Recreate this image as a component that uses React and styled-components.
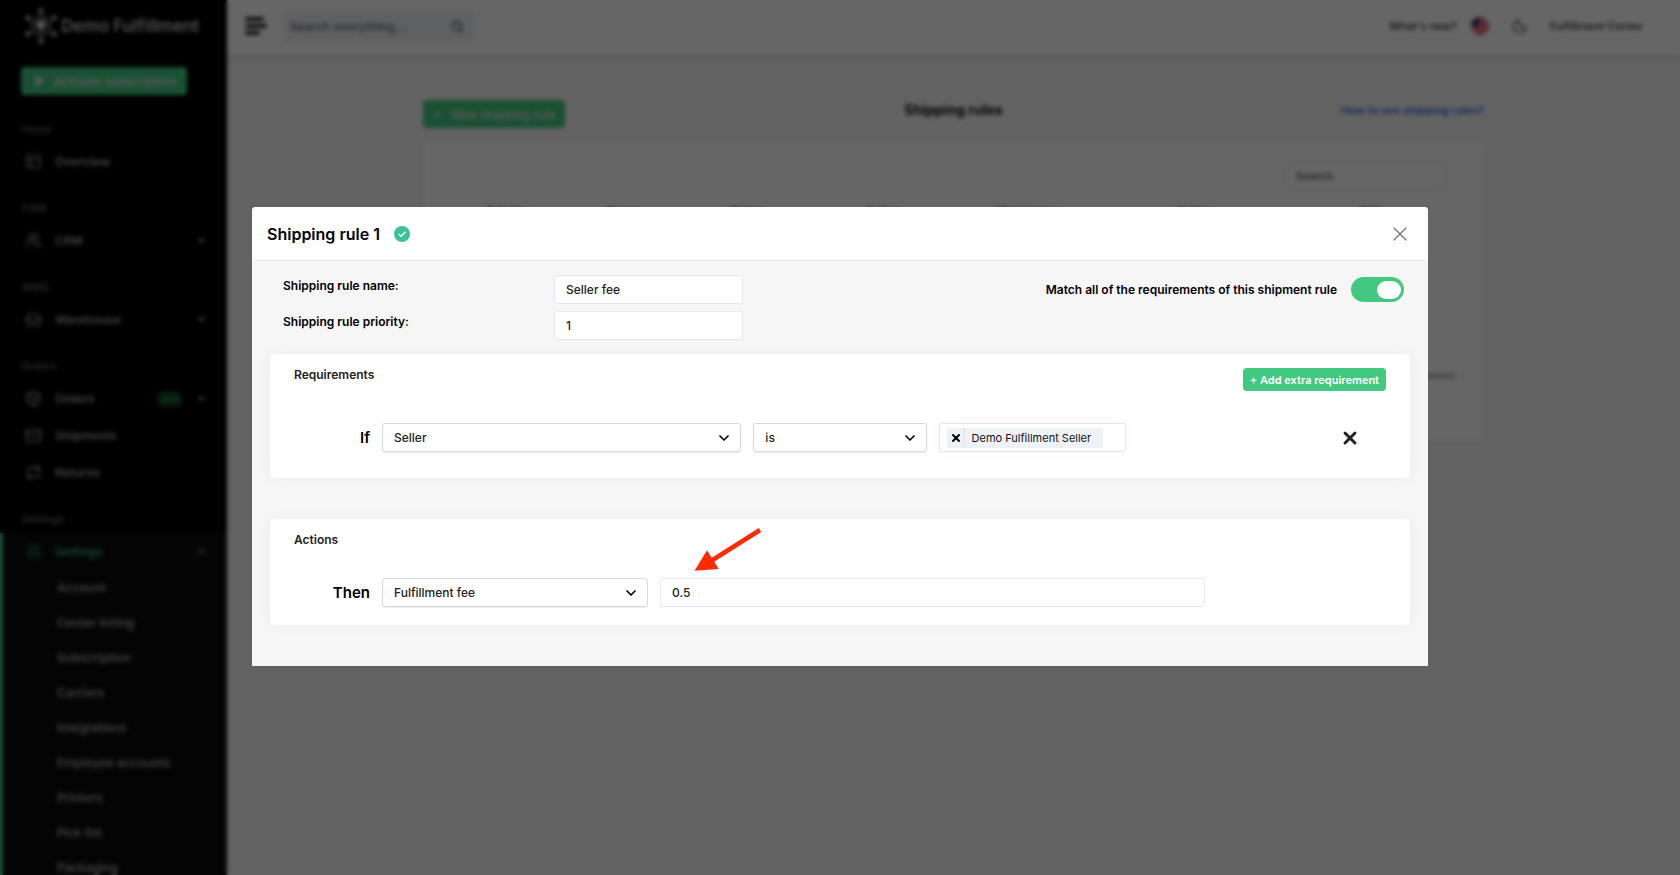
import React, { useState } from 'react';
import styled, { createGlobalStyle } from 'styled-components';
import {
	Box,
	ChevronDown,
	ChevronUp,
	Inbox,
	Mail,
	Moon,
	PanelsTopLeft,
	Play,
	Plus,
	Repeat,
	Search,
	SlidersVertical,
	Users,
	X,
} from 'lucide-react';

const NAV_GROUPS = [
	{ title: 'Home', items: [{ label: 'Overview', icon: PanelsTopLeft }] },
	{ title: 'CRM', items: [{ label: 'CRM', icon: Users, expandable: true }] },
	{ title: 'WMS', items: [{ label: 'Warehouse', icon: Inbox, expandable: true }] },
	{
		title: 'Orders',
		items: [
			{ label: 'Orders', icon: Box, expandable: true, badge: '261' },
			{ label: 'Shipments', icon: Mail },
			{ label: 'Returns', icon: Repeat },
		],
	},
];

const SETTINGS_LINKS = [
	'Account',
	'Center listing',
	'Subscription',
	'Carriers',
	'Integrations',
	'Employee accounts',
	'Printers',
	'Pick list',
	'Packaging',
];

const COLUMNS = [
	{ label: 'Priority', width: '11%' },
	{ label: 'Name', width: '12%' },
	{ label: 'Status', width: '13%' },
	{ label: 'Active', width: '14%' },
	{ label: 'Match rules', width: '15%' },
	{ label: 'Action', width: '18%' },
	{ label: 'Edit', width: '17%' },
];

const Logo = () => (
	<svg width="32" height="36" viewBox="0 0 32 36" fill="none" stroke="#bbb" strokeWidth="1.500">
		<path d="M16 8l8.500 5v10L16 28l-8.500-5V13z" />
		<path d="M16 18v7" />
		<g fill="#ccc" stroke="none">
			<path d="M11 14l5-2 5 2v5l-5 4-5-4z" />
			<circle cx="16" cy="3" r="2.500" />
			<circle cx="16" cy="33" r="2.500" />
			<circle cx="3" cy="10" r="2.500" />
			<circle cx="29" cy="10" r="2.500" />
			<circle cx="3" cy="26" r="2.500" />
			<circle cx="29" cy="26" r="2.500" />
		</g>
	</svg>
);

const MenuBars = () => (
	<svg width="22" height="20" viewBox="0 0 22 20" stroke="#222" strokeWidth="4" strokeLinecap="round">
		<path d="M2 3h15M2 10h18M2 17h11" />
	</svg>
);

const Flag = () => (
	<svg width="18" height="18" viewBox="0 0 18 18">
		<clipPath id="flag-round">
			<circle cx="9" cy="9" r="9" />
		</clipPath>
		<g clipPath="url(#flag-round)">
			<rect width="18" height="18" fill="#eee" />
			<path d="M0 1h18M0 5h18M0 9h18M0 13h18M0 17h18" stroke="#d02038" strokeWidth="2.600" />
			<rect width="8" height="9" fill="#20307a" />
		</g>
	</svg>
);

const CheckBadge = () => (
	<svg width="16" height="16" viewBox="0 0 16 16" fill="none">
		<circle cx="8" cy="8" r="8" fill="#38c296" />
		<path d="M5 8.200l2.100 2.100L11 6.200" stroke="#fff" strokeWidth="1.500" strokeLinecap="round" strokeLinejoin="round" />
	</svg>
);

const SelectField = ({ label, value }) => (
	<SelectWrapper>
		<Select aria-label={label} defaultValue={value}>
			<option>{value}</option>
		</Select>
		<ChevronDown size={16} strokeWidth={2.5} />
	</SelectWrapper>
);

const Sidebar = () => (
	<SidebarWrapper>
		<Brand>
			<Logo />
			Demo Fulfillment
		</Brand>
		<ActivateButton type="button">
			<Play size={12} fill="currentColor" />
			Activate subscription
		</ActivateButton>
		<Nav>
			{NAV_GROUPS.map((group) => (
				<NavGroup key={group.title}>
					<NavTitle>{group.title}</NavTitle>
					{group.items.map(({ label, icon: Icon, expandable, badge }) => (
						<NavItem key={label} href="#">
							<Icon size={17} />
							<NavLabel>{label}</NavLabel>
							{badge && <NavBadge>{badge}</NavBadge>}
							{expandable && <ChevronDown size={11} strokeWidth={4} />}
						</NavItem>
					))}
				</NavGroup>
			))}
			<NavTitle>Settings</NavTitle>
			<ActiveSection>
				<NavItem href="#" $active>
					<SlidersVertical size={17} />
					<NavLabel>Settings</NavLabel>
					<ChevronUp size={11} strokeWidth={4} />
				</NavItem>
				{SETTINGS_LINKS.map((label) => (
					<SubItem key={label} href="#">{label}</SubItem>
				))}
			</ActiveSection>
		</Nav>
	</SidebarWrapper>
);

const TopBar = () => (
	<TopBarWrapper>
		<IconButton type="button" aria-label="Toggle menu">
			<MenuBars />
		</IconButton>
		<GlobalSearch>
			<input type="text" aria-label="Search everything" placeholder="Search everything..." />
			<Search size={13} strokeWidth={3} />
		</GlobalSearch>
		<TopLinks>
			<NewsLink>
				<TopLink href="#">What's new?</TopLink>
				<Flag />
			</NewsLink>
			<Moon size={17} />
			<TopLink href="#">Fulfillment Center</TopLink>
		</TopLinks>
	</TopBarWrapper>
);

const RulesPage = () => (
	<Content>
		<PageHeader>
			<NewRuleButton type="button">
				<Plus size={11} strokeWidth={3} />
				New shipping rule
			</NewRuleButton>
			<PageTitle>Shipping rules</PageTitle>
			<HelpLink href="#">How to use shipping rules?</HelpLink>
		</PageHeader>
		<Card>
			<TableSearch type="text" aria-label="Search" placeholder="Search" />
			<Table>
				<thead>
					<tr>
						{COLUMNS.map(({ label, width }) => (
							<Th key={label} $width={width}>{label}</Th>
						))}
					</tr>
				</thead>
			</Table>
			<ScrollTrack />
		</Card>
	</Content>
);

const RuleModal = () => {
	const [matchAll, setMatchAll] = useState(true);

	return (
		<Modal role="dialog" aria-labelledby="rule-title">
			<ModalHeader>
				<ModalTitle id="rule-title">Shipping rule 1</ModalTitle>
				<CheckBadge />
				<CloseButton type="button" aria-label="Close">
					<X size={24} strokeWidth={1.5} />
				</CloseButton>
			</ModalHeader>
			<ModalBody>
				<RuleForm>
					<FormFields>
						<FieldLabel htmlFor="rule-name">Shipping rule name:</FieldLabel>
						<TextInput id="rule-name" type="text" defaultValue="Seller fee" />
						<FieldLabel htmlFor="rule-priority">Shipping rule priority:</FieldLabel>
						<TextInput id="rule-priority" type="text" defaultValue="1" />
					</FormFields>
					<ToggleLabel>
						Match all of the requirements of this shipment rule
						<Toggle
							type="checkbox"
							checked={matchAll}
							onChange={(e) => setMatchAll(e.target.checked)}
						/>
					</ToggleLabel>
				</RuleForm>

				<Panel>
					<PanelHeader>
						<PanelTitle>Requirements</PanelTitle>
						<AddButton type="button">+ Add extra requirement</AddButton>
					</PanelHeader>
					<RuleRow $columns="76px 359fr 173fr 187fr 248fr">
						<RowLabel>If</RowLabel>
						<SelectField label="Requirement field" value="Seller" />
						<SelectField label="Requirement operator" value="is" />
						<TagBox>
							<Tag>
								<TagRemove type="button" aria-label="Remove Demo Fulfillment Seller">
									<X size={12} strokeWidth={4} />
								</TagRemove>
								<TagText>Demo Fulfillment Seller</TagText>
							</Tag>
						</TagBox>
						<RemoveButton type="button" aria-label="Remove requirement">
							<X size={20} strokeWidth={3.5} />
						</RemoveButton>
					</RuleRow>
				</Panel>

				<Panel $compact>
					<PanelHeader>
						<PanelTitle>Actions</PanelTitle>
					</PanelHeader>
					<RuleRow $columns="76px 266fr 545fr 169fr">
						<RowLabel>Then</RowLabel>
						<SelectField label="Action" value="Fulfillment fee" />
						<ValueField>
							<TextInput type="text" aria-label="Fee amount" defaultValue="0.5" />
							<Arrow viewBox="0 0 68 44">
								<path d="M66 2L17 33" stroke="#ff2a00" strokeWidth="4.500" />
								<path d="M0.500 42.700L13 22.300L24.700 41z" fill="#ff2a00" />
							</Arrow>
						</ValueField>
					</RuleRow>
				</Panel>
			</ModalBody>
		</Modal>
	);
};

const App = () => {
	return (
		<>
			<GlobalStyle />
			<Page>
				<Sidebar />
				<Main>
					<TopBar />
					<RulesPage />
				</Main>
			</Page>
			<Overlay>
				<RuleModal />
			</Overlay>
		</>
	);
};

export default App;

const GlobalStyle = createGlobalStyle`
	* {
		box-sizing: border-box;
	}
	body {
		margin: 0;
		background: #f6f6f6;
		font-family: Inter, "Liberation Sans", sans-serif;
		font-size: 12px;
		font-weight: 600;
		color: #222;
	}
	button, input, select {
		font: inherit;
		color: inherit;
	}
	button {
		border: 0;
		padding: 0;
		background: none;
		cursor: pointer;
	}
	a {
		text-decoration: none;
	}
	svg {
		flex-shrink: 0;
	}
`;

const Page = styled.div`
	display: flex;
	height: 100vh;
	overflow: hidden;
`;

/* sidebar */
const SidebarWrapper = styled.aside`
	flex: 0 0 227px;
	background: #000;
	color: #999;
	overflow: hidden;
`;
const Brand = styled.div`
	display: flex;
	align-items: center;
	gap: 4px;
	padding: 8px 0 0 25px;
	font-size: 17px;
	color: #bbb;
	white-space: nowrap;
`;
const ActivateButton = styled.button`
	display: flex;
	align-items: center;
	gap: 8px;
	height: 28px;
	margin: 23px 0 22px 21px;
	padding: 0 10px 0 12px;
	border-radius: 4px;
	background: #42c97f;
	color: #ddd;
	white-space: nowrap;
`;
const Nav = styled.nav``;
const NavGroup = styled.div`
	margin-bottom: 16px;
`;
const NavTitle = styled.div`
	height: 24px;
	margin-bottom: 2px;
	padding-left: 21px;
	font-size: 11px;
	font-weight: 500;
	line-height: 24px;
	color: #666;
`;
const NavItem = styled.a`
	display: flex;
	align-items: center;
	gap: 13px;
	height: 37px;
	padding: 0 20px 0 25px;
	font-size: 12px;
	color: ${({ $active }) => ($active ? '#2fa866' : 'inherit')};
`;
const NavLabel = styled.span`
	flex: 1;
`;
const NavBadge = styled.span`
	padding: 2px 5px;
	border-radius: 8px;
	background: #12401f;
	font-size: 10px;
	color: #2a8a50;
`;
const ActiveSection = styled.div`
	background: #0c0c0c;
	box-shadow: inset 3px 0 0 #42c97f;
`;
const SubItem = styled.a`
	display: block;
	height: 35px;
	padding-left: 57px;
	font-size: 12px;
	line-height: 35px;
	color: inherit;
`;

/* page behind the dialog */
const Main = styled.div`
	flex: 1;
	min-width: 0;
`;
const TopBarWrapper = styled.header`
	display: flex;
	align-items: center;
	height: 54px;
	padding: 0 37px 2px 18px;
	background: #fff;
	box-shadow: 0 4px 14px rgba(0, 0, 0, 0.08);
`;
const IconButton = styled.button`
	display: flex;
`;
const GlobalSearch = styled.label`
	display: flex;
	align-items: center;
	width: 190px;
	height: 32px;
	margin-left: 17px;
	padding: 0 10px 0 6px;
	border-radius: 4px;
	background: #eef1f6;
	color: #555;

	input {
		flex: 1;
		min-width: 0;
		border: 0;
		padding: 0;
		background: none;
		font-weight: 500;
	}
	input::placeholder {
		color: #666;
	}
`;
const TopLinks = styled.div`
	display: flex;
	align-items: center;
	gap: 22px;
	margin-left: auto;
	color: #45555a;
`;
const NewsLink = styled.div`
	display: flex;
	align-items: center;
	gap: 14px;
`;
const TopLink = styled.a`
	font-size: 11px;
	font-weight: 500;
	color: #333;
`;
const Content = styled.main`
	width: 73%;
	margin: 0 auto;
	padding-top: 46px;
`;
const PageHeader = styled.div`
	display: grid;
	grid-template-columns: 1fr auto 1fr;
	align-items: start;
	height: 41px;
`;
const NewRuleButton = styled.button`
	display: flex;
	align-items: center;
	justify-self: start;
	gap: 8px;
	height: 28px;
	padding: 0 9px;
	border-radius: 4px;
	background: #42c97f;
	color: #ddd;
`;
const PageTitle = styled.h1`
	margin: 0;
	font-size: 14px;
	line-height: 20px;
	color: #111;
`;
const HelpLink = styled.a`
	justify-self: end;
	font-size: 11px;
	font-weight: 600;
	line-height: 20px;
	color: #3b6fe0;
`;
const Card = styled.section`
	display: flex;
	flex-direction: column;
	height: 300px;
	padding: 20px 28px;
	border-radius: 4px;
	background: #fff;
	box-shadow: 0 0 14px rgba(0, 0, 0, 0.06);
`;
const TableSearch = styled.input`
	align-self: flex-end;
	width: 166px;
	height: 29px;
	margin-right: 7px;
	padding: 0 12px;
	border: 1px solid #e3eaea;
	border-radius: 15px;
	font-size: 11px;

	&::placeholder {
		color: #667;
	}
`;
const Table = styled.table`
	width: 100%;
	margin-top: 11px;
	border-collapse: collapse;
	table-layout: fixed;
`;
const Th = styled.th`
	width: ${({ $width }) => $width};
	padding: 0;
	font-size: 11px;
	line-height: 20px;
`;
const ScrollTrack = styled.div`
	height: 6px;
	margin-top: auto;
	margin-bottom: 42px;
	border-radius: 3px;
	background: #ccc;
`;

/* dialog */
const Overlay = styled.div`
	position: fixed;
	inset: 0;
	padding: 207px 15% 0;
	background: rgba(0, 0, 0, 0.6);
	backdrop-filter: blur(2px);
`;
const Modal = styled.div`
	border-radius: 4px 4px 0 0;
	background: #f6f6f6;
	overflow: hidden;
`;
const ModalHeader = styled.div`
	display: flex;
	align-items: center;
	gap: 14px;
	height: 54px;
	padding: 0 16px 0 15px;
	border-bottom: 1px solid #e2e8f0;
	background: #fff;
`;
const ModalTitle = styled.h2`
	margin: 0;
	font-size: 16px;
	font-weight: 600;
	color: #000;
`;
const CloseButton = styled.button`
	display: flex;
	margin-left: auto;
	color: #808080;
`;
const ModalBody = styled.div`
	padding: 14px 18px 0;
`;
const RuleForm = styled.div`
	display: flex;
	justify-content: space-between;
	align-items: flex-start;
	margin-bottom: 14px;
	padding: 0 6px 0 13px;
	color: #000;
`;
const FormFields = styled.div`
	display: grid;
	grid-template-columns: 271px 189px;
	row-gap: 7px;
`;
const FieldLabel = styled.label`
	line-height: 22px;
`;
const TextInput = styled.input`
	width: 100%;
	height: 29px;
	padding: 0 11px;
	border: 1px solid #e2e8f0;
	border-radius: 3px;
	background: #fff;
	font-weight: 500;
	color: #222;
`;
const ToggleLabel = styled.label`
	display: flex;
	align-items: center;
	gap: 14px;
	height: 29px;
`;
const Toggle = styled.input`
	appearance: none;
	display: flex;
	align-items: center;
	width: 53px;
	height: 25px;
	margin: 0;
	padding: 0 3px;
	border-radius: 13px;
	background: ${({ checked }) => (checked ? '#42c97f' : '#ccc')};
	cursor: pointer;

	&::before {
		content: '';
		width: 24px;
		height: 18px;
		margin-left: ${({ checked }) => (checked ? 'auto' : '0')};
		border-radius: 9px;
		background: #fff;
	}
`;
const Panel = styled.section`
	margin-bottom: 41px;
	padding: ${({ $compact }) => ($compact ? '14px 24px 18px' : '14px 24px 26px')};
	border-radius: 4px;
	background: #fff;
	box-shadow: 0 0 14px rgba(0, 0, 0, 0.05);
`;
const PanelHeader = styled.div`
	display: flex;
	justify-content: space-between;
	align-items: flex-start;
	margin-bottom: 32px;
`;
const PanelTitle = styled.h3`
	margin: 0;
	font-size: 12px;
	font-weight: 600;
	line-height: 13px;
`;
const AddButton = styled.button`
	height: 23px;
	padding: 0 7px;
	border-radius: 4px;
	background: #42c97f;
	font-size: 11px;
	color: #fff;
`;
const RuleRow = styled.div`
	display: grid;
	grid-template-columns: ${({ $columns }) => $columns};
	align-items: center;
	gap: 12px;
`;
const RowLabel = styled.span`
	font-size: 15px;
	text-align: right;
	color: #000;
`;
const SelectWrapper = styled.div`
	display: grid;
	align-items: center;

	> * {
		grid-area: 1 / 1;
	}
	svg {
		justify-self: end;
		margin-right: 9px;
		color: #000;
		pointer-events: none;
	}
`;
const Select = styled.select`
	appearance: none;
	width: 100%;
	height: 29px;
	padding: 0 11px;
	border: 1px solid #d5dae0;
	border-radius: 3px;
	background: #fff;
	box-shadow: 0 1px 1px rgba(0, 0, 0, 0.08);
	font-weight: 500;
`;
const TagBox = styled.div`
	display: flex;
	align-items: center;
	height: 29px;
	padding: 0 7px;
	border: 1px solid #dfe6ef;
	border-radius: 2px;
	box-shadow: 0 0 12px rgba(0, 0, 0, 0.04);
`;
const Tag = styled.span`
	display: flex;
	height: 20px;
	border-radius: 2px;
	background: #eef1f6;
	font-size: 11px;
	font-weight: 400;
	line-height: 20px;
	white-space: nowrap;
	color: #111;
`;
const TagRemove = styled.button`
	display: flex;
	align-items: center;
	padding: 0 2px 0 3px;
	border-right: 1px dotted #ccd3dc;
	color: #000;
`;
const TagText = styled.span`
	padding: 0 12px 0 7px;
`;
const RemoveButton = styled.button`
	display: flex;
	justify-self: end;
	margin-right: 26px;
`;
const ValueField = styled.div`
	position: relative;
`;
const Arrow = styled.svg`
	position: absolute;
	left: 34px;
	bottom: 35px;
	width: 68px;
	height: 44px;
	fill: none;
	pointer-events: none;
`;
